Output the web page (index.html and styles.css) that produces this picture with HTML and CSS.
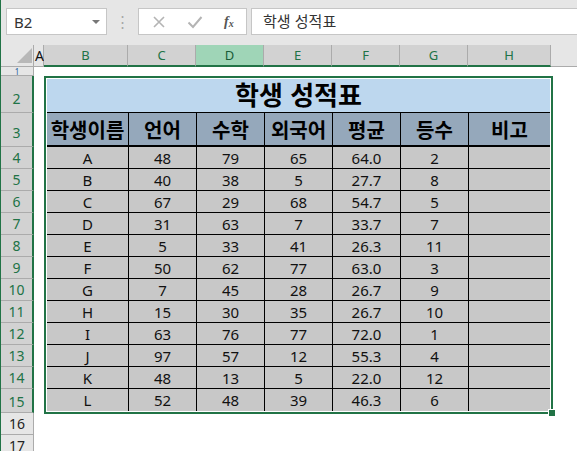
FILE: index.html
```html
<!DOCTYPE html>
<html lang="ko">
<head>
<meta charset="utf-8">
<link rel="stylesheet" href="styles.css">
</head>
<body>
<div class="app">
  <div class="toolbar">
    <div class="namebox"><span class="nb-text">B2</span><span class="nb-arrow"></span></div>
    <div class="dots">⋮</div>
    <div class="fbtns">
      <svg class="ico" width="14" height="14" viewBox="0 0 14 14"><path d="M2 2 L12 12 M12 2 L2 12" stroke="#b4b4b4" stroke-width="1.6" fill="none"/></svg>
      <svg class="ico" width="16" height="14" viewBox="0 0 16 14"><path d="M1.5 7.5 L6 12 L14.5 2" stroke="#b4b4b4" stroke-width="2" fill="none"/></svg>
      <span class="fx">f<sub>x</sub></span>
    </div>
    <div class="finput">학생 성적표</div>
  </div>

  <div class="sheet">
    <div class="colheads">
      <div class="corner"><span class="tri"></span></div>
      <div class="ch ch-a">A</div>
      <div class="ch sel w-b">B</div>
      <div class="ch sel w-m">C</div>
      <div class="ch act w-m">D</div>
      <div class="ch sel w-m">E</div>
      <div class="ch sel w-m">F</div>
      <div class="ch sel w-m">G</div>
      <div class="ch sel w-h">H</div>
      <div class="ch-rest"></div>
    </div>
    <div class="body">
      <div class="rowheads">
        <div class="rh h1">1</div>
        <div class="rh sel h2">2</div>
        <div class="rh sel h3">3</div>
        <div class="rh sel">4</div>
        <div class="rh sel">5</div>
        <div class="rh sel">6</div>
        <div class="rh sel">7</div>
        <div class="rh sel">8</div>
        <div class="rh sel">9</div>
        <div class="rh sel">10</div>
        <div class="rh sel">11</div>
        <div class="rh sel">12</div>
        <div class="rh sel">13</div>
        <div class="rh sel">14</div>
        <div class="rh sel h15">15</div>
        <div class="rh">16</div>
        <div class="rh h17">17</div>
      </div>
      <div class="cells">
        <div class="selection">
          <div class="title">학생 성적표</div>
          <div class="hrow">
            <div class="c cb">학생이름</div><div class="c">언어</div><div class="c">수학</div><div class="c">외국어</div><div class="c">평균</div><div class="c">등수</div><div class="c ch8">비고</div>
          </div>
          <div class="drow"><div class="c cb">A</div><div class="c">48</div><div class="c">79</div><div class="c">65</div><div class="c">64.0</div><div class="c">2</div><div class="c ch8"></div></div>
          <div class="drow"><div class="c cb">B</div><div class="c">40</div><div class="c">38</div><div class="c">5</div><div class="c">27.7</div><div class="c">8</div><div class="c ch8"></div></div>
          <div class="drow"><div class="c cb">C</div><div class="c">67</div><div class="c">29</div><div class="c">68</div><div class="c">54.7</div><div class="c">5</div><div class="c ch8"></div></div>
          <div class="drow"><div class="c cb">D</div><div class="c">31</div><div class="c">63</div><div class="c">7</div><div class="c">33.7</div><div class="c">7</div><div class="c ch8"></div></div>
          <div class="drow"><div class="c cb">E</div><div class="c">5</div><div class="c">33</div><div class="c">41</div><div class="c">26.3</div><div class="c">11</div><div class="c ch8"></div></div>
          <div class="drow"><div class="c cb">F</div><div class="c">50</div><div class="c">62</div><div class="c">77</div><div class="c">63.0</div><div class="c">3</div><div class="c ch8"></div></div>
          <div class="drow"><div class="c cb">G</div><div class="c">7</div><div class="c">45</div><div class="c">28</div><div class="c">26.7</div><div class="c">9</div><div class="c ch8"></div></div>
          <div class="drow"><div class="c cb">H</div><div class="c">15</div><div class="c">30</div><div class="c">35</div><div class="c">26.7</div><div class="c">10</div><div class="c ch8"></div></div>
          <div class="drow"><div class="c cb">I</div><div class="c">63</div><div class="c">76</div><div class="c">77</div><div class="c">72.0</div><div class="c">1</div><div class="c ch8"></div></div>
          <div class="drow"><div class="c cb">J</div><div class="c">97</div><div class="c">57</div><div class="c">12</div><div class="c">55.3</div><div class="c">4</div><div class="c ch8"></div></div>
          <div class="drow"><div class="c cb">K</div><div class="c">48</div><div class="c">13</div><div class="c">5</div><div class="c">22.0</div><div class="c">12</div><div class="c ch8"></div></div>
          <div class="drow last"><div class="c cb">L</div><div class="c">52</div><div class="c">48</div><div class="c">39</div><div class="c">46.3</div><div class="c">6</div><div class="c ch8"></div></div>
          <span class="handle"></span>
        </div>
      </div>
    </div>
  </div>
</div>
</body>
</html>
```

FILE: styles.css
```css
html, body {
  margin: 0;
  padding: 0;
  width: 577px;
  height: 451px;
  overflow: hidden;
  background: #ffffff;
}
.app {
  width: 577px;
  height: 451px;
  background: #ffffff;
  border-left: 1px solid #217346;
  box-sizing: border-box;
  font-family: "Noto Sans", "Noto Sans CJK KR", sans-serif;
  overflow: hidden;
}

/* ---------- toolbar ---------- */
.toolbar {
  height: 45px;
  background: #e6e6e6;
  display: flex;
  align-items: flex-start;
  padding-top: 8px;
  box-sizing: border-box;
}
.namebox {
  margin-left: 5px;
  width: 101px;
  height: 27px;
  box-sizing: border-box;
  background: #fff;
  border: 1px solid #c6c6c6;
  display: flex;
  align-items: center;
  justify-content: space-between;
  padding: 0 6px 0 7px;
}
.nb-text {
  font-size: 15px;
  color: #333;
  font-family: "Noto Sans", sans-serif;
}
.nb-arrow {
  width: 0;
  height: 0;
  border-left: 4px solid transparent;
  border-right: 4px solid transparent;
  border-top: 4px solid #777;
}
.dots {
  width: 31px;
  text-align: center;
  color: #a8a8a8;
  font-size: 15px;
  line-height: 27px;
}
.fbtns {
  width: 109px;
  height: 27px;
  box-sizing: border-box;
  background: #fff;
  border: 1px solid #c6c6c6;
  display: flex;
  align-items: center;
  padding-left: 13px;
  gap: 21px;
}
.fx {
  font-family: "Liberation Serif", serif;
  font-style: italic;
  font-weight: bold;
  font-size: 14px;
  color: #555;
}
.fx sub {
  font-size: 10px;
  vertical-align: -1px;
}
.finput {
  margin-left: 4px;
  flex: 1;
  height: 27px;
  box-sizing: border-box;
  background: #fff;
  border: 1px solid #c6c6c6;
  border-right: none;
  font-family: "Noto Sans CJK KR", sans-serif;
  font-size: 15px;
  color: #333;
  padding-left: 11px;
  line-height: 24px;
}

/* ---------- column headers ---------- */
.colheads {
  display: flex;
  height: 22px;
  background: #e6e6e6;
}
.corner {
  width: 33px;
  height: 22px;
  box-sizing: border-box;
  border-right: 1px solid #ababab;
  border-bottom: 1px solid #ababab;
  background: #e6e6e6;
  position: relative;
}
.tri {
  position: absolute;
  right: 1px;
  bottom: 3px;
  width: 0;
  height: 0;
  border-left: 15px solid transparent;
  border-bottom: 15px solid #b8b8b8;
}
.ch {
  height: 22px;
  box-sizing: border-box;
  font-size: 13px;
  display: flex;
  align-items: center;
  justify-content: center;
  font-family: "Noto Sans", sans-serif;
}
.ch-a {
  width: 10px;
  background: #e6e6e6;
  color: #111;
  border-right: 1px solid #ababab;
  border-bottom: 1px solid #ababab;
  font-size: 14px;
  justify-content: flex-start;
  padding-left: 1px;
}
.sel.ch {
  background: #d2d2d2;
  color: #217346;
  border-right: 1px solid #ababab;
  border-bottom: 2px solid #217346;
}
.act.ch {
  background: #9fd5b7;
  color: #1a5c38;
  border-right: 1px solid #ababab;
  border-bottom: 2px solid #217346;
}
.w-b { width: 84px; }
.w-m { width: 68px; }
.w-h { width: 83px; }
.ch-rest {
  flex: 1;
  height: 22px;
  box-sizing: border-box;
  border-bottom: 1px solid #ababab;
}

/* ---------- body ---------- */
.body {
  display: flex;
}
.rowheads {
  width: 33px;
  flex: none;
  display: flex;
  flex-direction: column;
}
.rh {
  height: 22px;
  box-sizing: border-box;
  background: #e6e6e6;
  border-right: 1px solid #ababab;
  border-bottom: 1px solid #ababab;
  color: #222;
  font-size: 14px;
  display: flex;
  align-items: flex-end;
  justify-content: center;
  padding-bottom: 1px;
  font-family: "Noto Sans", sans-serif;
}
.rh.sel {
  background: #d2d2d2;
  color: #217346;
  border-right: 2px solid #217346;
}
.rh.h1 {
  height: 9px;
  font-size: 8px;
  line-height: 9px;
  overflow: hidden;
  align-items: flex-start;
  padding-bottom: 0;
  color: #1f5fa0;
}
.rh.h2 { height: 37px; padding-bottom: 4px; }
.rh.h3 { height: 34px; padding-bottom: 4px; }
.rh.h15 { height: 24px; }
.rh.h17 { height: 20px; padding-bottom: 0; align-items: flex-start; padding-top: 1px; }

.cells {
  flex: 1;
  background: #fff;
  padding: 9px 0 0 10px;
}

/* ---------- selected table ---------- */
.selection {
  position: relative;
  width: 509px;
  box-sizing: border-box;
  border: 2px solid #217346;
  padding: 1px;
  background: #fff;
}
.handle {
  position: absolute;
  right: -5px;
  bottom: -5px;
  width: 6px;
  height: 6px;
  background: #217346;
  border: 1px solid #fff;
}
.title {
  height: 34px;
  background: #bdd7ee;
  border-bottom: 1px solid #000;
  box-sizing: border-box;
  text-align: center;
  font-family: "Noto Sans CJK KR", sans-serif;
  font-weight: bold;
  font-size: 26px;
  line-height: 30px;
  color: #000;
}
.hrow, .drow {
  display: flex;
}
.hrow {
  height: 34px;
  background: #95a8bb;
  border-bottom: 2px solid #000;
  box-sizing: border-box;
}
.drow {
  height: 22px;
  background: #c8c8c8;
  border-bottom: 1px solid #000;
  box-sizing: border-box;
}
.drow.last { border-bottom: none; }
.c {
  width: 68px;
  box-sizing: border-box;
  border-right: 1px solid #000;
  display: flex;
  align-items: center;
  justify-content: center;
  color: #111;
}
.c.cb { width: 82px; }
.c.ch8 { width: 81px; border-right: none; }
.hrow .c {
  font-family: "Noto Sans CJK KR", sans-serif;
  font-weight: bold;
  font-size: 20px;
  color: #000;
}
.drow .c {
  font-family: "Noto Sans", "Noto Sans CJK KR", sans-serif;
  font-size: 15px;
}
```
